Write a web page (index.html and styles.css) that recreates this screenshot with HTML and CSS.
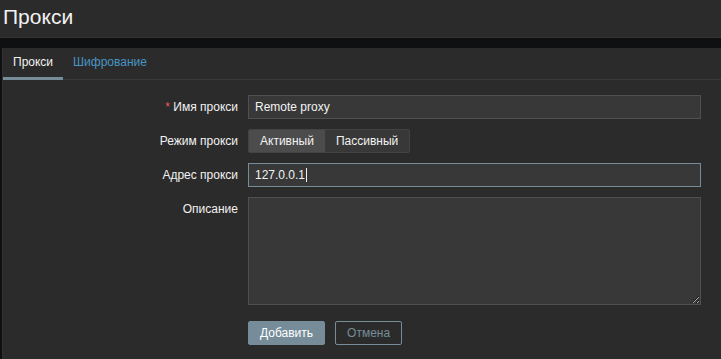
FILE: index.html
```html
<!DOCTYPE html>
<html lang="ru">
<head>
    <meta charset="UTF-8">
    <title>Прокси</title>
    <link rel="stylesheet" href="styles.css">
</head>
<body>
    <!-- Page header -->
    <header class="page-header">
        <h1>Прокси</h1>
    </header>

    <!-- Form container -->
    <main class="form-container">
        <ul class="tabs">
            <li class="active"><a href="#">Прокси</a></li>
            <li><a href="#">Шифрование</a></li>
        </ul>

        <form class="form-list">
            <label class="form-label" for="host"><span class="required">*</span> Имя прокси</label>
            <div class="form-field">
                <input id="host" class="text-input" type="text" value="Remote proxy">
            </div>

            <label class="form-label">Режим прокси</label>
            <div class="form-field">
                <div class="radio-list">
                    <span class="radio-item checked">Активный</span>
                    <span class="radio-item">Пассивный</span>
                </div>
            </div>

            <label class="form-label" for="address">Адрес прокси</label>
            <div class="form-field">
                <div id="address" class="text-input focused">127.0.0.1<span class="caret"></span></div>
            </div>

            <label class="form-label" for="description">Описание</label>
            <div class="form-field">
                <textarea id="description" class="text-area"></textarea>
            </div>

            <div></div>
            <div class="form-actions">
                <button type="button" class="btn-primary">Добавить</button>
                <button type="button" class="btn-alt">Отмена</button>
            </div>
        </form>
    </main>
</body>
</html>
```

FILE: styles.css
```css
/* === Base === */
:root {
    --bg: #2b2b2b;
    --page: #0e1012;
    --border: #383838;
    --input-bg: #383838;
    --input-border: #4f4f4f;
    --text: #f2f2f2;
    --link: #4796c4;
    --accent: #768d99;
    --red: #e45959;
}

* {
    margin: 0;
    padding: 0;
    box-sizing: border-box;
}

body {
    background: var(--page);
    color: var(--text);
    font-family: 'Liberation Sans', Arial, sans-serif;
    font-size: 12px;
    height: 359px;
    overflow: hidden;
}

/* Header */
.page-header {
    background: var(--bg);
    height: 38px;
    border-bottom: 1px solid #333333;
    padding: 3px 3px 0;
}

.page-header h1 {
    font-size: 21px;
    font-weight: normal;
    line-height: 28px;
}

/* Container */
.form-container {
    margin: 10px 0 0 2px;
    background: var(--bg);
    border-left: 1px solid #313131;
    height: 320px;
}

/* Tabs */
.tabs {
    display: flex;
    list-style: none;
    border-bottom: 1px solid var(--border);
    height: 32px;
}

.tabs li {
    height: 32px;
}

.tabs a {
    display: block;
    padding: 0 10px;
    line-height: 29px;
    height: 32px;
    color: var(--link);
    text-decoration: none;
    border-bottom: 3px solid transparent;
}

.tabs .active a {
    color: var(--text);
    border-bottom-color: var(--accent);
}

/* Form */
.form-list {
    display: grid;
    grid-template-columns: 225px 453px;
    column-gap: 10px;
    row-gap: 10px;
    padding: 15px 10px 0;
}

.form-label {
    text-align: right;
    line-height: 24px;
}

.required {
    color: var(--red);
}

.text-input {
    display: block;
    width: 100%;
    height: 24px;
    padding: 0 6px;
    background: var(--input-bg);
    border: 1px solid var(--input-border);
    color: var(--text);
    font: inherit;
    line-height: 22px;
    outline: none;
}

.text-input.focused {
    border-color: var(--accent);
}

.caret {
    display: inline-block;
    width: 1px;
    height: 14px;
    background: var(--text);
    vertical-align: -3px;
    margin-left: 1px;
}

.text-area {
    display: block;
    width: 100%;
    height: 108px;
    background: var(--input-bg);
    border: 1px solid var(--input-border);
    color: var(--text);
    font: inherit;
    outline: none;
}

/* Radio buttons */
.radio-list {
    display: inline-flex;
    height: 24px;
    border: 1px solid #434343;
    border-radius: 2px;
    background: var(--input-bg);
    overflow: hidden;
}

.radio-item {
    padding: 0 11px;
    line-height: 22px;
}

.radio-item.checked {
    background: #4c4c4c;
}

/* Buttons */
.form-actions {
    display: flex;
    gap: 10px;
    margin-top: 6px;
}

.form-actions button {
    height: 24px;
    padding: 0 11px;
    border-radius: 2px;
    font: inherit;
    cursor: pointer;
}

.btn-primary {
    background: var(--accent);
    border: 1px solid var(--accent);
    color: #ffffff;
}

.btn-alt {
    background: transparent;
    border: 1px solid var(--accent);
    color: var(--accent);
    padding: 0 17px;
}
```
